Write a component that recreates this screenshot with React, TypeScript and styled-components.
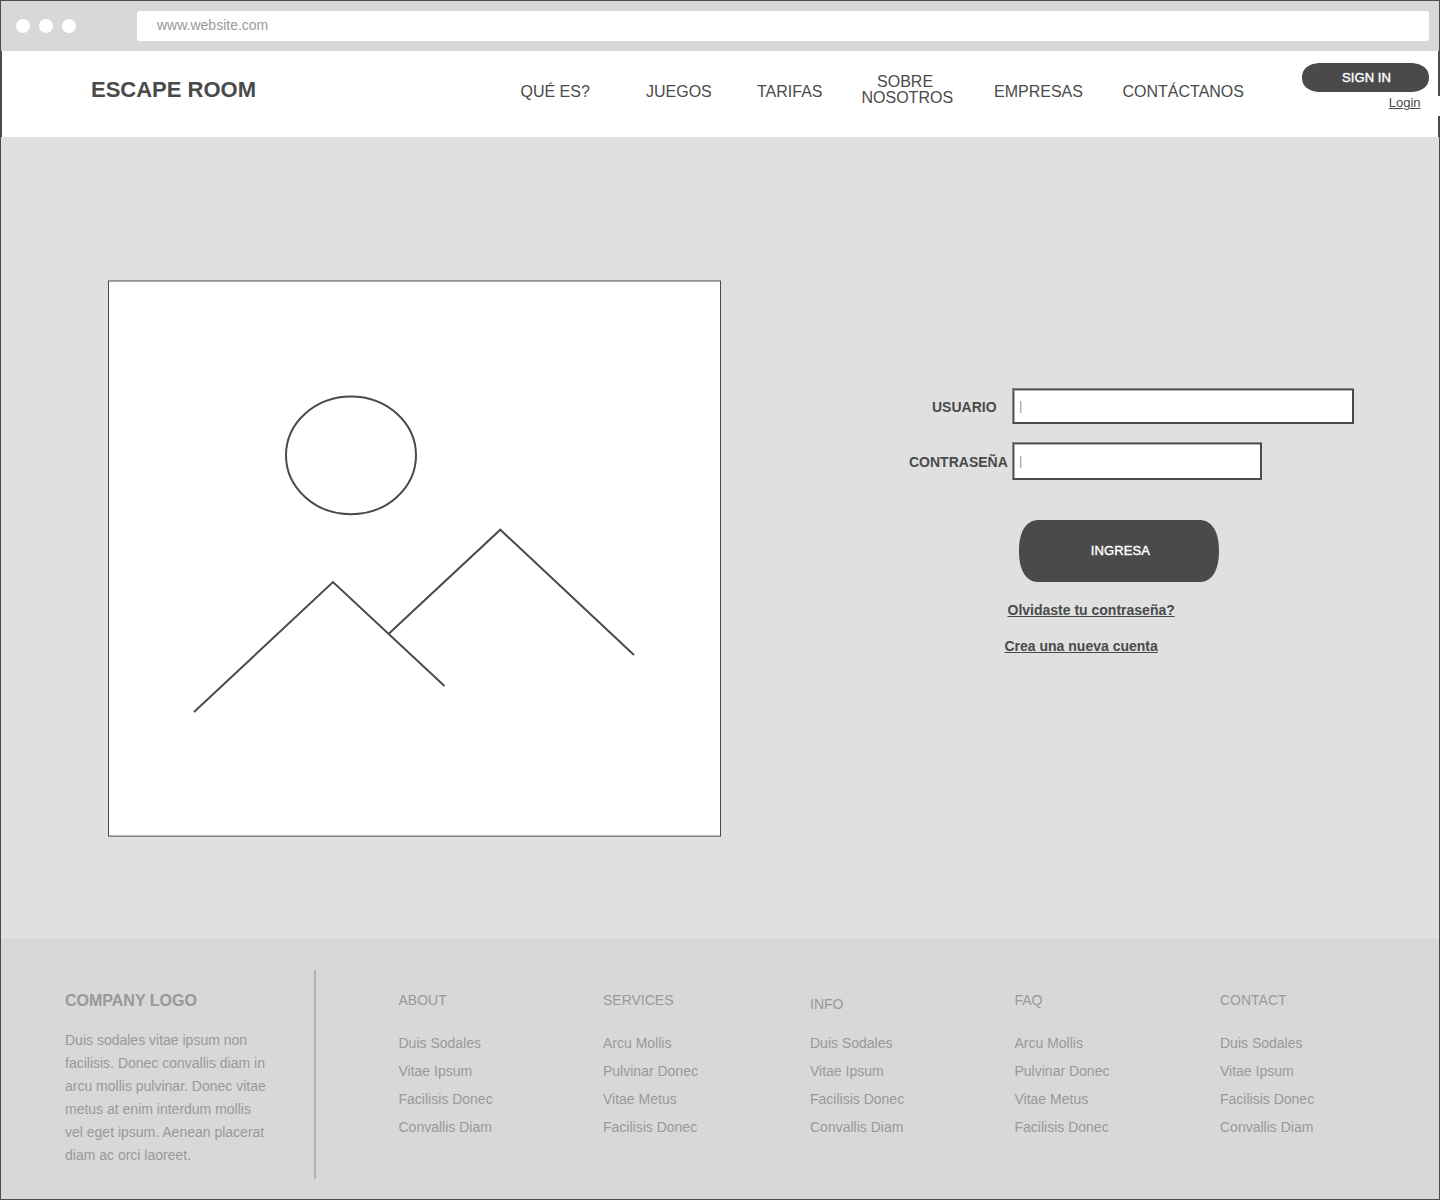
import React from "react";
import styled, { createGlobalStyle } from "styled-components";

const ink = "#4a4a4a";
const muted = "#999999";
const chrome = "#d8d8d8";

const GlobalStyle = createGlobalStyle`
  *, *::before, *::after { box-sizing: border-box; }
  html, body { margin: 0; padding: 0; background: #ffffff; }
  body {
    font-family: "Liberation Sans", Arial, Helvetica, sans-serif;
    color: ${ink};
    overflow: hidden;
  }
`;

const Window = styled.div`
  width: 1440px;
  height: 1200px;
  display: flex;
  flex-direction: column;
  background: ${ink};
  padding: 1px;
`;

const BrowserBar = styled.div`
  height: 50px;
  flex: none;
  display: flex;
  align-items: center;
  padding: 0 10px 0 15px;
  background: ${chrome};
`;

const Dots = styled.div`
  display: flex;
  gap: 9px;
  width: 121px;
`;

const Dot = styled.span`
  width: 14px;
  height: 14px;
  border-radius: 50%;
  background: #ffffff;
`;

const Address = styled.div`
  flex: 1;
  height: 30px;
  padding-left: 20px;
  border-radius: 3px;
  background: #ffffff;
  color: ${muted};
  font-size: 14px;
  line-height: 28px;
`;

const Header = styled.header`
  height: 86px;
  flex: none;
  display: flex;
  margin: 0 -1px;
  padding-left: 89px;
  background: #ffffff;
  border: solid ${ink};
  border-width: 0 2px;
`;

const Brand = styled.h1`
  width: 429.5px;
  margin: 26px 0 0;
  font-size: 22px;
  line-height: 25px;
  font-weight: 700;
`;

const Nav = styled.nav`
  display: grid;
  grid-template-columns: 125.5px 111px 104.5px 132.5px 128.5px 179.5px;
  height: 34px;
  margin-top: 23px;
  align-items: start;
  justify-items: start;
`;

const NavLink = styled.a<{ $twoLines: boolean }>`
  padding-top: ${(p) => (p.$twoLines ? 0 : 10)}px;
  font-size: 16px;
  line-height: 16px;
  text-align: center;
  white-space: pre-line;
`;

const Account = styled.div`
  flex: 1;
  display: flex;
  flex-direction: column;
  margin: 12px -2px 0 0;
`;

const Button = styled.button<{ $w: number; $h: number; $rx: number }>`
  width: ${(p) => p.$w}px;
  height: ${(p) => p.$h}px;
  padding: 0 0 0 2px;
  border: 0;
  border-radius: ${(p) => p.$rx}px / ${(p) => p.$h / 2}px;
  corner-shape: superellipse(1.2);
  background: ${ink};
  color: #ffffff;
  font-family: inherit;
  font-size: 13px;
  font-weight: 400;
  letter-spacing: 0.1px;
  line-height: 16px;
  -webkit-text-stroke: 0.4px #ffffff;
`;

const LoginStrip = styled.div`
  height: 20px;
  margin-top: 4px;
  padding-right: 19.5px;
  background: #ffffff;
  text-align: right;
  font-size: 13px;
  line-height: 14px;
`;

const TextLink = styled.a`
  text-decoration: underline;
`;

const Main = styled.main`
  height: 800px;
  flex: none;
  display: flex;
  align-items: flex-start;
  padding: 143px 0 0 107px;
  background: #e0e0e0;
`;

const Picture = styled.svg`
  display: block;
  flex: none;
  width: 613px;
  height: 558px;
`;

const LoginForm = styled.form`
  display: flex;
  flex-direction: column;
  align-items: flex-start;
  margin: 109px 0 0 184px;
`;

const Field = styled.div<{ $gap: number }>`
  display: flex;
  align-items: center;
  margin-bottom: ${(p) => p.$gap}px;
`;

const Label = styled.label<{ $indent: number }>`
  width: 107px;
  padding-left: ${(p) => p.$indent}px;
  font-size: 14px;
  line-height: 16px;
  font-weight: 700;
`;

const Input = styled.input<{ $w: number; $h: number }>`
  width: ${(p) => p.$w}px;
  height: ${(p) => p.$h}px;
  margin-left: 1px;
  padding: 0 0 2px 5px;
  border: solid ${ink};
  border-width: 1px 2px 2px 1px;
  border-radius: 0;
  outline: 0;
  background: #ffffff;
  box-shadow: -1px -1px 0 #8c8c8c, -1px 0 0 #8c8c8c, 0 -1px 0 #8c8c8c,
    inset 1px 1px 0 #b4b4b4;
  color: ${muted};
  font-family: inherit;
  font-size: 13px;
`;

const Actions = styled.div`
  display: flex;
  flex-direction: column;
  align-items: flex-start;
  padding-left: 99.5px;
`;

const FormLink = styled(TextLink)<{ $indent: number; $top: number }>`
  margin: ${(p) => p.$top}px 0 0 ${(p) => p.$indent}px;
  font-size: 14px;
  line-height: 16px;
  font-weight: 700;
`;

const SubmitRow = styled.div`
  padding-left: 14.9px;
`;

const Footer = styled.footer`
  flex: 1;
  display: flex;
  align-items: flex-start;
  padding: 32px 0 0 64px;
  background: ${chrome};
  border-top: 1px solid #e6e6e6;
  color: ${muted};
  font-size: 14px;
`;

const Company = styled.section`
  width: 251px;
  height: 209px;
  padding-top: 22px;
  border-right: 2px solid #b2b2b2;
`;

const CompanyName = styled.h2`
  margin: 0 0 19px;
  font-size: 16px;
  line-height: 18px;
`;

const CompanyText = styled.p`
  width: 204px;
  margin: 0;
  line-height: 23px;
`;

const LinkColumns = styled.div`
  display: grid;
  grid-template-columns: 204.5px 207px 204.5px 205.5px 150px;
  padding: 22px 0 0 82.5px;
`;

const ColumnTitle = styled.h3<{ $drop?: boolean }>`
  height: 37px;
  margin: 0;
  padding-top: ${(p) => (p.$drop ? 4 : 0)}px;
  font-size: 14px;
  line-height: 16px;
  font-weight: 400;
`;

const LinkList = styled.ul`
  margin: 0;
  padding: 0;
  list-style: none;
  line-height: 28px;
`;

const navItems = ["QUÉ ES?", "JUEGOS", "TARIFAS", "SOBRE\u00a0\nNOSOTROS", "EMPRESAS", "CONTÁCTANOS"];

const linksA = ["Duis Sodales", "Vitae Ipsum", "Facilisis Donec", "Convallis Diam"];
const linksB = ["Arcu Mollis", "Pulvinar Donec", "Vitae Metus", "Facilisis Donec"];

const columns = [
  { title: "ABOUT", links: linksA },
  { title: "SERVICES", links: linksB },
  { title: "INFO", links: linksA, drop: true },
  { title: "FAQ", links: linksB },
  { title: "CONTACT", links: linksA },
];

export default function App() {
  return (
    <>
      <GlobalStyle />
      <Window>
        <BrowserBar>
          <Dots>
            <Dot />
            <Dot />
            <Dot />
          </Dots>
          <Address>www.website.com</Address>
        </BrowserBar>
        <Header>
          <Brand>ESCAPE ROOM</Brand>
          <Nav>
            {navItems.map((item) => (
              <NavLink key={item} $twoLines={item.includes("\n")}>
                {item}
              </NavLink>
            ))}
          </Nav>
          <Account>
            <Button type="button" $w={127} $h={29} $rx={20}>
              SIGN IN
            </Button>
            <LoginStrip>
              <TextLink>Login</TextLink>
            </LoginStrip>
          </Account>
        </Header>
        <Main>
          <Picture viewBox="0 0 613 558" fill="none" stroke={ink} strokeWidth="2">
            <rect x="0.5" y="1" width="612" height="555.1" fill="#ffffff" strokeWidth="1" />
            <ellipse cx="243" cy="175.3" rx="65" ry="58.9" />
            <path d="M86 432 L225 302 L336.5 406" />
            <path d="M281 353.5 L392.3 249.7 L526 375" />
          </Picture>
          <LoginForm>
            <Field $gap={19}>
              <Label $indent={27}>USUARIO</Label>
              <Input $w={341} $h={35} defaultValue="|" />
            </Field>
            <Field $gap={40}>
              <Label $indent={4}>CONTRASEÑA</Label>
              <Input $w={249} $h={37} defaultValue="|" />
            </Field>
            <Actions>
              <SubmitRow>
                <Button type="button" $w={200} $h={62} $rx={20}>
                  INGRESA
                </Button>
              </SubmitRow>
              <FormLink $indent={3} $top={20}>
                Olvidaste tu contraseña?
              </FormLink>
              <FormLink $indent={0} $top={20}>
                Crea una nueva cuenta
              </FormLink>
            </Actions>
          </LoginForm>
        </Main>
        <Footer>
          <Company>
            <CompanyName>COMPANY LOGO</CompanyName>
            <CompanyText>
              Duis sodales vitae ipsum non facilisis. Donec convallis diam in arcu mollis pulvinar.
              Donec vitae metus at enim interdum mollis vel eget ipsum. Aenean placerat diam ac orci
              laoreet.
            </CompanyText>
          </Company>
          <LinkColumns>
            {columns.map((column) => (
              <section key={column.title}>
                <ColumnTitle $drop={column.drop}>{column.title}</ColumnTitle>
                <LinkList>
                  {column.links.map((link) => (
                    <li key={link}>{link}</li>
                  ))}
                </LinkList>
              </section>
            ))}
          </LinkColumns>
        </Footer>
      </Window>
    </>
  );
}
